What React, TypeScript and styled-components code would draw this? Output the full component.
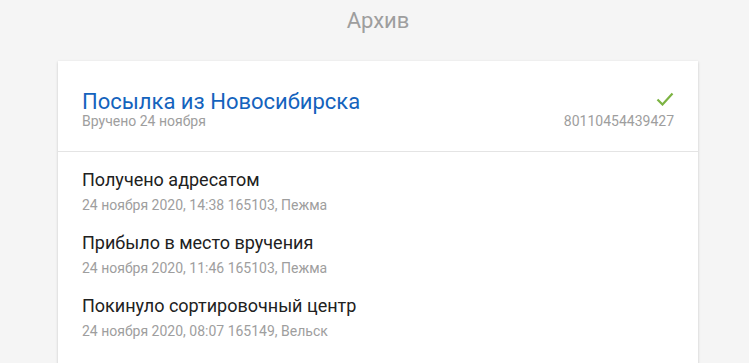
import { FC } from 'react'
import styled, { createGlobalStyle } from 'styled-components'

const GlobalStyle = createGlobalStyle`
  body {
    margin: 0;
    background: #f5f5f5;
    font-family: Roboto, 'Noto Sans', sans-serif;
  }
`

const Page = styled.div`
  padding: 8px 51px 0 58px;
`

const PageTitle = styled.h1`
  margin: 0 0 27px;
  text-align: center;
  font-size: 22px;
  font-weight: 400;
  line-height: 26px;
  color: #9e9e9e;
`

const Card = styled.section`
  width: 640px;
  background: #fff;
  box-shadow: 0 1px 3px rgba(0, 0, 0, 0.12), 0 1px 2px rgba(0, 0, 0, 0.08);
`

const CardHeader = styled.header`
  display: flex;
  justify-content: space-between;
  align-items: flex-end;
  height: 91px;
  box-sizing: border-box;
  padding: 0 24px 22px;
  border-bottom: 1px solid #e4e4e4;
`

const Title = styled.div`
  font-size: 22px;
  line-height: 22px;
  color: #1463bd;
`

const Sub = styled.div`
  font-size: 14px;
  line-height: 16px;
  color: #9e9e9e;
`

const Meta = styled.div`
  display: flex;
  flex-direction: column;
  align-items: flex-end;
  gap: 7px;
`

const Events = styled.ul`
  list-style: none;
  margin: 0;
  padding: 17px 24px 10px;
`

const Event = styled.li`
  display: flex;
  flex-direction: column;
  gap: 6px;
  margin-bottom: 19px;
`

const EventName = styled.div`
  font-size: 18px;
  line-height: 22px;
  color: #212121;
`

const EventInfo = styled.div`
  font-size: 14px;
  line-height: 16px;
  color: #9e9e9e;
`

const events = [
  { name: 'Получено адресатом', info: '24 ноября 2020, 14:38 165103, Пежма' },
  { name: 'Прибыло в место вручения', info: '24 ноября 2020, 11:46 165103, Пежма' },
  { name: 'Покинуло сортировочный центр', info: '24 ноября 2020, 08:07 165149, Вельск' },
]

const Check: FC = () => (
  <svg width="18" height="14" viewBox="0 0 18 14">
    <path d="M1.5 7.5 L6.5 12.5 L16.5 1.5" fill="none" stroke="#7cb342" strokeWidth="2.2" />
  </svg>
)

export default function App() {
  return (
    <>
      <GlobalStyle />
      <Page>
        <PageTitle>Архив</PageTitle>
        <Card>
          <CardHeader>
            <div>
              <Title>Посылка из Новосибирска</Title>
              <Sub>Вручено 24 ноября</Sub>
            </div>
            <Meta>
              <Check />
              <Sub>80110454439427</Sub>
            </Meta>
          </CardHeader>
          <Events>
            {events.map((e) => (
              <Event key={e.name}>
                <EventName>{e.name}</EventName>
                <EventInfo>{e.info}</EventInfo>
              </Event>
            ))}
          </Events>
        </Card>
      </Page>
    </>
  )
}
